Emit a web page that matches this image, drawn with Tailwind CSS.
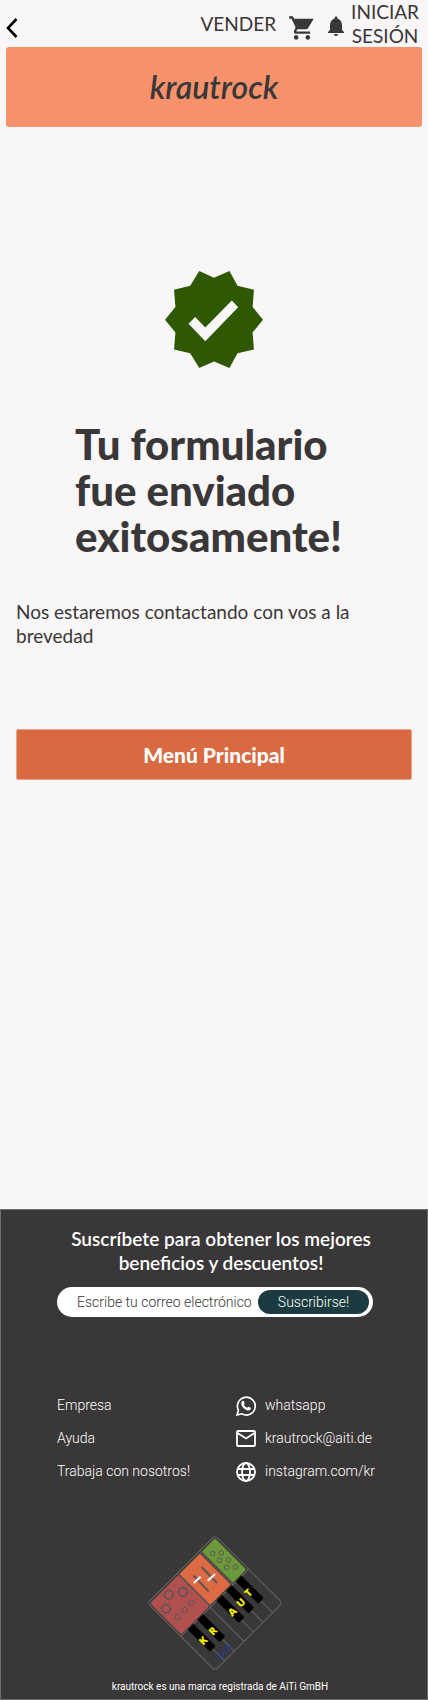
<!DOCTYPE html>
<html lang="es">
<head>
<meta charset="utf-8">
<meta name="viewport" content="width=device-width, initial-scale=1">
<title>krautrock</title>
<script src="https://cdn.jsdelivr.net/npm/@tailwindcss/browser@4"></script>
</head>
<body class="flex min-h-screen flex-col bg-[#f8f6f7] font-['Gill_Sans','Gill_Sans_MT',Lato,sans-serif] text-[#3a3738]">
<header class="px-[6px]">
  <nav class="flex h-[47px] items-center pr-[3px]">
    <button type="button" aria-label="Volver" class="mt-2 mr-auto">
      <svg class="h-5 w-3" viewBox="0 0 12 20" fill="none" stroke="#000" stroke-width="2.6"><path d="M10.5 1 2 10l8.500 9"/></svg>
    </button>
    <a href="#" class="text-[19px] leading-6">VENDER</a>
    <button type="button" aria-label="Carrito" class="mt-2 ml-3">
      <svg class="size-7" viewBox="0 0 24 24" fill="currentColor"><path d="M7 18c-1.100 0-1.990.9-1.990 2S5.900 22 7 22s2-.9 2-2-.9-2-2-2zM1 2v2h2l3.600 7.590-1.350 2.450c-.16.28-.25.61-.25.96 0 1.100.9 2 2 2h12v-2H7.420c-.14 0-.25-.11-.25-.25l.03-.12.9-1.630h7.450c.75 0 1.410-.41 1.750-1.030L22 4H5.210l-.94-2H1zm16 16c-1.100 0-1.990.9-1.990 2s.89 2 1.990 2 2-.9 2-2-.9-2-2-2z"/></svg>
    </button>
    <button type="button" aria-label="Notificaciones" class="mt-1 ml-2">
      <svg class="size-6" viewBox="0 0 24 24" fill="currentColor"><path d="M12 22c1.100 0 2-.9 2-2h-4c0 1.100.89 2 2 2zm6-6v-5c0-3.070-1.640-5.640-4.500-6.320V4c0-.83-.67-1.500-1.500-1.500s-1.500.67-1.500 1.500v.68C7.630 5.360 6 7.920 6 11v5l-2 2v1h16v-1l-2-2z"/></svg>
    </button>
    <a href="#" class="ml-[3px] text-center text-[19px] leading-6">INICIAR<br>SESIÓN</a>
  </nav>
  <div class="flex h-20 items-center justify-center rounded-[3px] bg-[#f5926c]">
    <a href="#" class="font-['Segoe_Script','Brush_Script_MT',Lato,cursive] text-[32px] leading-10 font-semibold italic">krautrock</a>
  </div>
</header>

<main class="flex flex-1 flex-col px-4">
  <svg class="mx-auto mt-[144px] h-[97px] w-[98px]" viewBox="76 65 292 289" role="img" aria-label="Enviado">
    <path fill="#2e5902" d="M76 210l31-38-4-51 48-12 27-44 44 20 46-20 24 44 49 12-4 51 31 38-31 38 4 51-49 11-24 44-46-19-44 19-27-44-48-11 4-51z"/>
    <path fill="#f8f6f7" d="M146 222l20-20 30 31 79-80 19 20-98 101z"/>
  </svg>
  <h1 class="mt-[53px] px-[59px] text-[42px] leading-[46px] font-black whitespace-nowrap">Tu formulario<br>fue enviado<br>exitosamente!</h1>
  <p class="mt-[41px] text-[19px] leading-6">Nos estaremos contactando con vos a la<br>brevedad</p>
  <button type="button" class="mt-[81px] h-[51px] w-full rounded-[2px] border border-[#e6a58a] bg-[#d86941] text-[21px] leading-6 font-black text-white">Menú Principal</button>
</main>

<footer class="flex h-[491px] flex-col border border-[#6f6d6e] bg-[#3a3738] pr-[54px] pl-14 font-[Roboto,sans-serif] text-white">
  <h2 class="mt-[17px] ml-3 text-center font-['Gill_Sans','Gill_Sans_MT',Lato,sans-serif] text-[19px] leading-6 font-semibold whitespace-nowrap">Suscríbete para obtener los mejores<br>beneficios y descuentos!</h2>
  <form class="mt-3 flex h-[30px] items-center rounded-full bg-white pr-1 pl-5">
    <input type="email" aria-label="Correo electrónico" placeholder="Escribe tu correo electrónico" class="min-w-0 flex-1 text-[14px] font-light text-[#3a3738] outline-none placeholder:text-[#3a3738]">
    <button type="button" class="h-6 w-[111px] rounded-full bg-[#1b3b40] text-[14px] leading-6 font-light">Suscribirse!</button>
  </form>
  <div class="mt-[78px] flex text-[14px] leading-[21px] font-light">
    <ul class="flex flex-1 flex-col gap-3">
      <li><a href="#">Empresa</a></li>
      <li><a href="#">Ayuda</a></li>
      <li><a href="#">Trabaja con nosotros!</a></li>
    </ul>
    <ul class="flex w-[137px] flex-col gap-3 whitespace-nowrap">
      <li><a href="#" class="flex items-center gap-[9px]">
        <svg class="size-5 shrink-0" viewBox="0 0 20 20" fill="none" stroke="#fff" stroke-width="1.700"><path d="M1 19l1.400-4.800A8.900 8.900 0 1 1 5.800 17.800z"/><path fill="#fff" stroke="none" d="M6.300 5.100c.6-.5 1.300-.4 1.600.2l.7 1.700c.1.300 0 .6-.8 1.500.8 1.500 1.900 2.600 3.600 3.300.8-1 .9-1.200 1.300-1l1.900.9c.4.300.3 1.200-.1 1.800-.8 1-2.300 1.300-3.800.7C8.500 13.300 6.500 11.400 5.500 9 4.900 7.500 5.300 5.900 6.300 5.100z"/></svg>
        whatsapp</a></li>
      <li><a href="#" class="flex items-center gap-[9px]">
        <svg class="size-5 shrink-0" viewBox="0 0 20 20" fill="none" stroke="#fff" stroke-width="1.800"><rect x="1" y="2" width="18" height="15" rx="1"/><path d="M1.500 4 10 9.500 18.500 4"/></svg>
        krautrock@aiti.de</a></li>
      <li><a href="#" class="flex items-center gap-[9px]">
        <svg class="size-5 shrink-0" viewBox="0 0 20 20" fill="none" stroke="#fff" stroke-width="1.800"><circle cx="10" cy="10" r="9"/><ellipse cx="10" cy="10" rx="4" ry="9"/><path d="M1.600 7h16.800M1.600 13h16.800"/></svg>
        instagram.com/kr</a></li>
    </ul>
  </div>
  <svg class="mx-auto mt-[52px] h-[138px] w-[138px]" viewBox="49 45 414 414" role="img" aria-label="krautrock synth" fill="none">
    <g transform="translate(256 252) rotate(-45)">
      <rect x="-143" y="-143" width="286" height="286" rx="11" stroke="#666465" stroke-width="3"/>
      <path stroke="#666465" stroke-width="3" d="M-143-1h286M-102-1v144M-61-1v144M-20-1v144M20-1v144M61-1v144M102-1v144M-17-143V-1M77-143V-1"/>
      <rect x="-138" y="-137" width="119" height="132" rx="5" fill="#b0504f"/>
      <rect x="-14" y="-137" width="87" height="131" rx="3" fill="#dc6a42"/>
      <rect x="81" y="-137" width="56" height="132" rx="3" fill="#6c993b"/>
      <path fill="#000" d="M-114-2h24V89q0 4-4 4h-16q-4 0-4-4zM-73-2h24V89q0 4-4 4h-16q-4 0-4-4zM8-2h24V89q0 4-4 4H12q-4 0-4-4zM49-2h24V89q0 4-4 4H53q-4 0-4-4zM90-2h24V89q0 4-4 4H94q-4 0-4-4z"/>
      <g fill="#f4ed05" font-family="Open Sans, sans-serif" font-weight="800" font-size="31" text-anchor="middle">
        <text x="-105" y="66">K</text><text x="-64" y="66">R</text><text x="18" y="66">A</text><text x="56" y="65">U</text><text x="92" y="60">T</text>
      </g>
      <text x="-84" y="132" fill="#213f9b" font-family="Liberation Sans, sans-serif" font-style="italic" font-size="31" text-anchor="middle">rock</text>
    </g>
    <g stroke="#5c5557" stroke-width="4">
      <circle cx="117" cy="227" r="12"/><circle cx="160" cy="219" r="12"/><circle cx="109" cy="269" r="12"/>
      <g stroke-width="3" stroke-dasharray="6 5"><circle cx="117" cy="227" r="15"/><circle cx="160" cy="219" r="15"/><circle cx="109" cy="269" r="15"/></g>
      <g stroke-width="3"><circle cx="186" cy="252" r="8"/><circle cx="165" cy="273" r="8"/><circle cx="144" cy="294" r="8"/>
      <circle cx="249" cy="104" r="7"/><circle cx="275" cy="102" r="7"/><circle cx="270" cy="124" r="7"/><circle cx="296" cy="123" r="7"/><circle cx="291" cy="145" r="7"/><circle cx="317" cy="144" r="7"/></g>
      <path stroke-width="6" d="M216 144l46 48M191 169l46 48"/>
      <path stroke="#fff" stroke-width="6" d="M192 192l21-19M234 185l22-19"/>
    </g>
  </svg>
  <p class="mt-2 ml-[10px] text-center text-[10px] leading-[14px] whitespace-nowrap">krautrock es una marca registrada de AiTi GmBH</p>
</footer>
</body>
</html>
